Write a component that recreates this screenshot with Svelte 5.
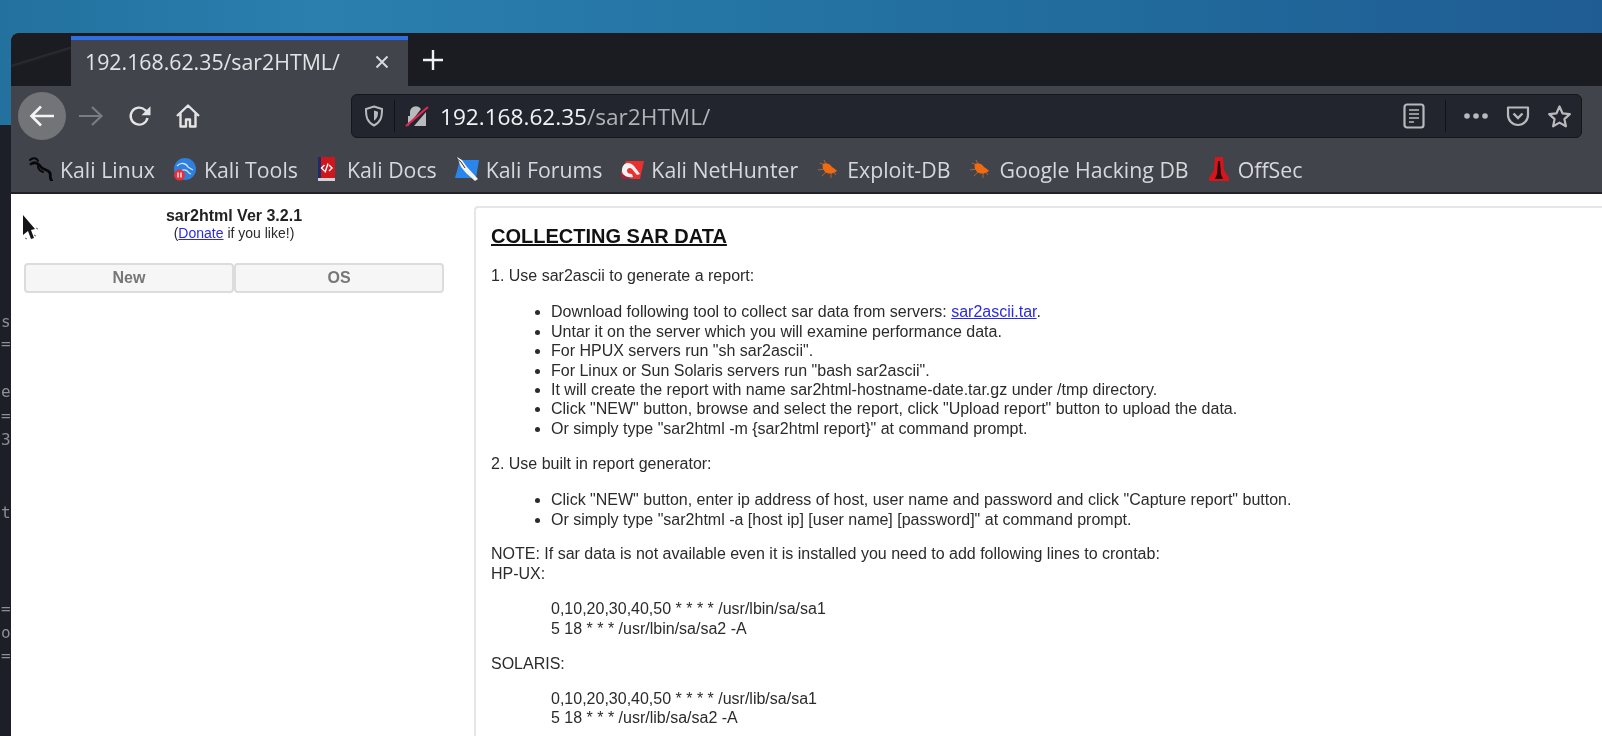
<script>
	const bullets1 = [
		'Untar it on the server which you will examine performance data.',
		'For HPUX servers run "sh sar2ascii".',
		'For Linux or Sun Solaris servers run "bash sar2ascii".',
		'It will create the report with name sar2html-hostname-date.tar.gz under /tmp directory.',
		'Click "NEW" button, browse and select the report, click "Upload report" button to upload the data.',
		'Or simply type "sar2html -m {sar2html report}" at command prompt.'
	];
	const bullets2 = [
		'Click "NEW" button, enter ip address of host, user name and password and click "Capture report" button.',
		'Or simply type "sar2html -a [host ip] [user name] [password]" at command prompt.'
	];
	const scraps = [
		{ t: 's.', y: 322 },
		{ t: '=', y: 344 },
		{ t: 'e', y: 392 },
		{ t: '=', y: 416 },
		{ t: '3.', y: 440 },
		{ t: 't.', y: 513 },
		{ t: '=', y: 609 },
		{ t: 'o.', y: 633 },
		{ t: '=', y: 656 }
	];
</script>

<div class="desktop">
	<div class="terminal">
		{#each scraps as s}
			<span class="scrap" style="top: {s.y - 125 - 10}px">{s.t}</span>
		{/each}
	</div>

	<div class="window">
		<div class="tabstrip">
			<div class="tab">
				<span class="tab-title">192.168.62.35/sar2HTML/</span>
				<svg class="tab-close" width="16" height="16" viewBox="0 0 16 16"><path d="M2.5 2.5l11 11M13.5 2.5l-11 11" stroke="#d8d9dc" stroke-width="2" fill="none"/></svg>
			</div>
			<svg class="newtab" width="22" height="22" viewBox="0 0 22 22"><path d="M11 1v20M1 11h20" stroke="#f0f0f2" stroke-width="2.4" fill="none"/></svg>
		</div>

		<div class="navbar">
			<div class="back">
				<svg width="28" height="28" viewBox="0 0 28 28"><path d="M26 14H4M13 4.5L3.5 14l9.5 9.5" stroke="#f4f4f5" stroke-width="2.6" fill="none"/></svg>
			</div>
			<svg class="nav-icon fwd" width="26" height="26" viewBox="0 0 26 26"><path d="M1 13h22M14 4l9.5 9-9.5 9" stroke="#7b7c81" stroke-width="2.2" fill="none"/></svg>
			<svg class="nav-icon reload" width="24" height="24" viewBox="0 0 24 24"><path d="M19.5 14a8.5 8.5 0 1 1-2.4-8L21 9.5" stroke="#e4e4e6" stroke-width="2.4" fill="none"/><path d="M22.5 2.2v9h-9z" fill="#e4e4e6"/></svg>
			<svg class="nav-icon home" width="26" height="26" viewBox="0 0 26 26"><path d="M2 13L13 2.5 24 13M5.5 10.5V23.5h5.5v-7h4v7h5.500V10.500" stroke="#e4e4e6" stroke-width="2.400" fill="none" stroke-linejoin="round"/></svg>

			<div class="urlbar">
				<svg class="shield" width="20" height="22" viewBox="0 0 20 22"><path d="M10 1.500l8 2.500c0 8-1 13-8 16.500C3 17 2 12 2 4z" stroke="#b8b9bc" stroke-width="2" fill="none"/><path d="M10 5.500l4 1.200c0 4-.5 6.500-4 9z" fill="#b8b9bc"/></svg>
				<span class="divider first"></span>
				<svg class="lock" width="24" height="24" viewBox="0 0 24 24"><path d="M3 22V12h2V8a6 6 0 0 1 11-3L3 22zM21 8v14H9z" fill="#b9babd"/><path d="M1 22L23 3" stroke="#e22850" stroke-width="2.200"/></svg>
				<span class="url"><span class="host">192.168.62.35</span>/sar2HTML/</span>
				<svg class="reader" width="22" height="26" viewBox="0 0 22 26"><rect x="1.500" y="1.500" width="19" height="23" rx="2.500" stroke="#b8b9bc" stroke-width="2.200" fill="none"/><path d="M6 7h10M6 11h10M6 15h10M6 19h5" stroke="#b8b9bc" stroke-width="1.600"/></svg>
				<span class="divider"></span>
				<svg class="dots" width="24" height="6" viewBox="0 0 24 6"><circle cx="3" cy="3" r="2.800" fill="#b8b9bc"/><circle cx="12" cy="3" r="2.800" fill="#b8b9bc"/><circle cx="21" cy="3" r="2.800" fill="#b8b9bc"/></svg>
				<svg class="pocket" width="24" height="22" viewBox="0 0 24 22"><path d="M2 2.500h20V10a10 10 0 0 1-20 0z" stroke="#b8b9bc" stroke-width="2.200" fill="none" stroke-linejoin="round"/><path d="M7.500 8.500L12 13l4.500-4.500" stroke="#b8b9bc" stroke-width="2.400" fill="none"/></svg>
				<svg class="star" width="25" height="24" viewBox="0 0 25 24"><path d="M12.500 2.500l3 6.800 7.300.8-5.400 5 1.500 7.200-6.400-3.700-6.400 3.700 1.500-7.200-5.400-5 7.300-.8z" stroke="#b8b9bc" stroke-width="2.200" fill="none" stroke-linejoin="round"/></svg>
			</div>
		</div>

		<div class="bookmarks">
			<span class="bm">
				<svg viewBox="0 0 24 24"><g stroke="#08080a" fill="none" stroke-linecap="round"><path d="M1 3C4 0 8 1 9 4" stroke-width="2"/><path d="M2 7C6 4 10 7 12 10c2 3 7 2 9 6 1 3-1 5 2 8" stroke-width="2.800"/><path d="M9 9c0 3 2 5 5 6" stroke-width="2"/></g></svg>
				Kali Linux
			</span>
			<span class="bm">
				<svg viewBox="0 0 24 24"><circle cx="12" cy="12" r="11" fill="#2f80dc"/><path d="M4 9c4-4 9-3 11 1l5 3M8 14c3-2 6-1 8 2l2 1" stroke="#cfe2f6" stroke-width="1.300" fill="none"/><circle cx="6.500" cy="18" r="5.500" fill="#e5303a"/><path d="M5 15.500v5M8 15.500v5" stroke="#fff" stroke-width="1.300"/></svg>
				Kali Tools
			</span>
			<span class="bm">
				<svg viewBox="0 0 24 24"><path d="M2 0h17v21H2z" fill="#cf161c"/><path d="M2 0h3v21H2z" fill="#1d2c68"/><path d="M2 21h17v3H2z" fill="#d4d4d6"/><path d="M8.500 8l-3 3 3 3M13 8l3 3-3 3M12 6.500l-3 9" stroke="#fff" stroke-width="1.400" fill="none"/></svg>
				Kali Docs
			</span>
			<span class="bm">
				<svg viewBox="0 0 24 24"><path d="M5 3h19l-3 18H0z" fill="#2a86ea"/><path d="M2 0l5 3 5 7 11 12-3 2-9-8-5-6z" fill="#f2f2f2"/><path d="M1 1l5 4 4 6" stroke="#34343a" stroke-width="1" fill="none"/></svg>
				Kali Forums
			</span>
			<span class="bm">
				<svg viewBox="0 0 24 24"><path d="M6 4h18l-4 18H3l-2-6z" fill="#ea3030"/><path d="M1 16l2 6h8z" fill="#a81e3c"/><path d="M2 12C3 5 10 4 14 9l6 8-3 1-5-6c-2-2-5-1-5 2 0 2 2 3 5 3l1 3c-6 1-12-2-11-8z" fill="#f2f2f2"/></svg>
				Kali NetHunter
			</span>
			<span class="bm">
				<svg viewBox="0 0 24 24"><path d="M4 6l5 2M8 3l2 4M2 13l6-1M6 19l4-4M15 21l0-5M20 18l-3-4" stroke="#a8653c" stroke-width="1"/><path d="M7 7c3-2 7 0 9 3 2 1 4 3 5 4-4 3-8 3-10 2-4-2-5-6-4-9z" fill="#f06a10"/></svg>
				Exploit-DB
			</span>
			<span class="bm">
				<svg viewBox="0 0 24 24"><path d="M4 6l5 2M8 3l2 4M2 13l6-1M6 19l4-4M15 21l0-5M20 18l-3-4" stroke="#a8653c" stroke-width="1"/><path d="M7 7c3-2 7 0 9 3 2 1 4 3 5 4-4 3-8 3-10 2-4-2-5-6-4-9z" fill="#f06a10"/></svg>
				Google Hacking DB
			</span>
			<span class="bm">
				<svg viewBox="0 0 24 24"><path d="M8 0h8l1 13 5 8v3H2v-3l5-8z" fill="#d8141c"/><path d="M11 4h2l1 13 2 5H8l2-5z" fill="#2a0b0d"/></svg>
				OffSec
			</span>
		</div>

		<div class="page">
			<aside class="sidebar">
				<svg class="cursor" width="18" height="28" viewBox="0 0 18 28"><path d="M1 1l12 14-4 1 3 8-3 1-3-8-5 4z" fill="#151517"/><path d="M12 21l2 1M14 14l2 1M3 24l2 1" stroke="#666" stroke-width="1"/></svg>
				<div class="brand">sar2html Ver 3.2.1</div>
				<div class="donate">(<a href="#top">Donate</a> if you like!)</div>
				<div class="btns">
					<button>New</button>
					<button>OS</button>
				</div>
			</aside>

			<main class="panel">
				<h3>COLLECTING SAR DATA</h3>
				<p>1. Use sar2ascii to generate a report:</p>
				<ul>
					<li>Download following tool to collect sar data from servers: <a href="#top">sar2ascii.tar</a>.</li>
					{#each bullets1 as b}
						<li>{b}</li>
					{/each}
				</ul>
				<p>2. Use built in report generator:</p>
				<ul>
					{#each bullets2 as b}
						<li>{b}</li>
					{/each}
				</ul>
				<p>NOTE: If sar data is not available even it is installed you need to add following lines to crontab:<br />HP-UX:</p>
				<blockquote>0,10,20,30,40,50 * * * * /usr/lbin/sa/sa1<br />5 18 * * * /usr/lbin/sa/sa2 -A</blockquote>
				<p>SOLARIS:</p>
				<blockquote>0,10,20,30,40,50 * * * * /usr/lib/sa/sa1<br />5 18 * * * /usr/lib/sa/sa2 -A</blockquote>
			</main>
		</div>
	</div>
</div>

<style>
	:global(body) {
		margin: 0;
		overflow: hidden;
	}

	.desktop {
		position: relative;
		width: 1602px;
		height: 736px;
		overflow: hidden;
		padding: 33px 0 0 11px;
		box-sizing: border-box;
		background: linear-gradient(90deg, #23719f 0%, #2a7fae 20%, #226f9f 60%, #1f5c93 100%);
		filter: blur(0.4px);
	}

	.terminal {
		position: absolute;
		left: 0;
		top: 125px;
		width: 12px;
		height: 611px;
		background: #1c1f27;
		overflow: hidden;
		font: 16px "DejaVu Sans Mono", monospace;
		color: #8d8f95;
	}

	.scrap {
		position: absolute;
		left: 1px;
		line-height: 20px;
	}

	.window {
		position: relative;
		height: 703px;
		border-radius: 8px 0 0 0;
		overflow: hidden;
		background: #fff;
	}

	.tabstrip {
		display: flex;
		height: 53px;
		background: linear-gradient(163deg, #1b1c21 30px, #2a2c31 31px, #1b1c21 34px);
		background-size: 60px 100%;
		background-repeat: no-repeat;
		background-color: #1b1c21;
		align-items: stretch;
		padding-left: 60px;
	}

	.tab {
		width: 337px;
		display: flex;
		align-items: center;
		justify-content: space-between;
		box-sizing: border-box;
		border-top: 4px solid #2e6fe6;
		margin-top: 3px;
		padding: 0 18px 3px 14px;
		background: #42444b;
		color: #e2e3e6;
		font: 21.3px "Open Sans", sans-serif;
	}

	.tab-title {
		white-space: nowrap;
	}

	.newtab {
		align-self: center;
		margin: 0 0 0 14px;
	}

	.navbar {
		display: flex;
		align-items: center;
		height: 60px;
		background: #42444b;
		padding: 0 20px 0 7px;
	}

	.back {
		width: 48px;
		height: 48px;
		border-radius: 50%;
		background: #737478;
		display: flex;
		align-items: center;
		justify-content: center;
		flex: none;
	}

	.nav-icon {
		flex: none;
	}

	.fwd {
		margin-left: 12px;
	}

	.reload {
		margin-left: 24px;
	}

	.home {
		margin-left: 23px;
	}

	.urlbar {
		flex: 1;
		display: flex;
		align-items: center;
		height: 44px;
		box-sizing: border-box;
		margin-left: 150px;
		padding: 0 0 0 12px;
		background: #23252e;
		border: 1px solid #15161a;
		border-radius: 6px;
		font: 22.6px "Open Sans", sans-serif;
		color: #b1b2b6;
	}

	.divider {
		width: 1px;
		height: 32px;
		background: #111216;
		margin: 0 18px 0 20px;
	}

	.divider.first {
		margin: 0 10px 0 10px;
	}

	.url {
		flex: 1;
		margin-left: 11px;
		white-space: nowrap;
	}

	.host {
		color: #f2f3f5;
	}

	.pocket {
		margin-left: 18px;
	}

	.star {
		margin: 0 9px 0 17px;
	}

	.bookmarks {
		display: flex;
		align-items: center;
		gap: 18px;
		height: 48px;
		box-sizing: border-box;
		background: #42444b;
		border-bottom: 2px solid #222329;
		padding: 0 0 0 18px;
		color: #d6d8dc;
		font: 21.3px "Open Sans", sans-serif;
	}

	.bm {
		display: flex;
		align-items: center;
		gap: 7px;
		white-space: nowrap;
	}

	.bm svg {
		flex: none;
		width: 24px;
		height: 24px;
	}

	.page {
		position: relative;
		display: flex;
		align-items: flex-start;
		background: #fff;
		font: 16px/19.4px "Liberation Sans", Arial, sans-serif;
		color: #2b2b2b;
	}

	.sidebar {
		width: 420px;
		flex: none;
		margin: 12px 0 0 13px;
		text-align: center;
	}

	.cursor {
		position: absolute;
		left: 11px;
		top: 20px;
	}

	.brand {
		font-weight: bold;
		color: #222;
	}

	.donate {
		font-size: 14px;
		line-height: 17px;
	}

	a {
		color: #2a2ae8;
		text-decoration: underline;
	}

	.btns {
		display: flex;
		margin-top: 21px;
	}

	button {
		flex: 1;
		height: 30px;
		padding: 0;
		background: #f6f6f6;
		border: 2px solid #dcdcdc;
		border-radius: 4px;
		color: #777;
		font: bold 16px "Liberation Sans", Arial, sans-serif;
	}

	.panel {
		flex: 1;
		margin: 12px 0 0 30px;
		padding: 14px 0 0 15px;
		height: 540px;
		border: 2px solid #e6e6e6;
		border-right: none;
		border-radius: 4px 0 0 0;
		box-sizing: border-box;
	}

	h3 {
		margin: 0 0 16px;
		font-size: 20px;
		line-height: 28px;
		color: #111;
		text-decoration: underline;
	}

	p {
		margin: 0;
	}

	ul {
		margin: 17px 0 15.5px;
		padding-left: 60px;
	}

	blockquote {
		margin: 16px 0 15.5px 60px;
	}
</style>
